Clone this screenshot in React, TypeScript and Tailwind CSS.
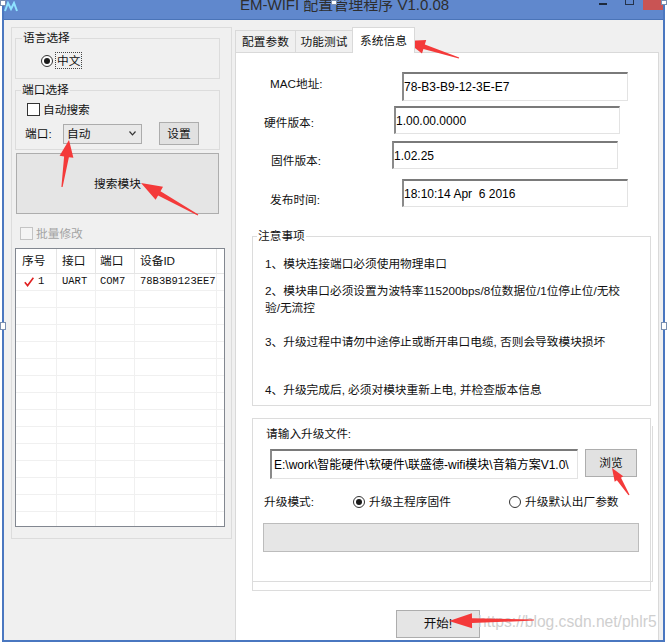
import type { ReactNode } from "react";

const colWidths = ["w-[41px]", "w-[39px]", "w-[39px]", "w-[82px]"];
const headPads = ["pl-[6px]", "pl-[5px]", "pl-[4px]", "pl-[5px]"];
const rowPads = ["pl-[8px]", "pl-[5px]", "pl-[4px]", "pl-[5px]"];

const arrows = [
  { from: [62, 187], to: [69, 140], head: 17, width: 14 },
  { from: [198, 215], to: [141, 183], head: 21, width: 15 },
  { from: [459, 58], to: [406, 41], head: 19, width: 14 },
  { from: [629, 495], to: [612, 468], head: 13, width: 10 },
  { from: [534, 620], to: [449, 621], head: 23, width: 15 },
];

function arrowPoints(from: number[], to: number[], head: number, width: number) {
  const [x1, y1] = from;
  const [x2, y2] = to;
  const len = Math.hypot(x2 - x1, y2 - y1);
  const ux = (x2 - x1) / len;
  const uy = (y2 - y1) / len;
  const nx = -uy;
  const ny = ux;
  const bx = x2 - ux * head;
  const by = y2 - uy * head;
  const hw = width / 2;
  const sw = 2.4;
  const tw = 0.6;
  const pts = [
    [x1 + nx * tw, y1 + ny * tw],
    [bx + nx * sw, by + ny * sw],
    [bx + nx * hw, by + ny * hw],
    [x2, y2],
    [bx - nx * hw, by - ny * hw],
    [bx - nx * sw, by - ny * sw],
    [x1 - nx * tw, y1 - ny * tw],
  ];
  return pts.map((p) => `${p[0].toFixed(1)},${p[1].toFixed(1)}`).join(" ");
}

function Radio({ checked }: { checked?: boolean }) {
  return (
    <span className="flex h-[12px] w-[12px] shrink-0 items-center justify-center rounded-full border border-[#333] bg-white">
      {checked ? <span className="h-[6px] w-[6px] rounded-full bg-[#1a1a1a]" /> : null}
    </span>
  );
}

function Field({ value, className }: { value: string; className: string }) {
  return (
    <div
      className={`flex items-center overflow-hidden whitespace-nowrap border-b border-l-2 border-r border-t-2 border-b-[#e3e3e3] border-l-[#8a8a8a] border-r-[#e3e3e3] border-t-[#7a7a7a] bg-white text-[12px] text-black ${className}`}
    >
      {value}
    </div>
  );
}

function ListRow({ cells, header }: { cells?: ReactNode[]; header?: boolean }) {
  return (
    <div
      className={
        header
          ? "flex h-[25px] shrink-0 border-b border-[#e5e5e5]"
          : "flex h-[17px] shrink-0 border-b border-[#f0f0f0]"
      }
    >
      {colWidths.map((w, i) => (
        <div
          key={i}
          className={`${w} flex shrink-0 items-center whitespace-nowrap border-r ${
            header ? "border-[#e5e5e5]" : "border-[#f0f0f0]"
          } ${header ? headPads[i] : rowPads[i]}`}
        >
          {cells?.[i]}
        </div>
      ))}
      <div className="flex-1" />
    </div>
  );
}

function GroupTitle({ children, className }: { children: ReactNode; className: string }) {
  return (
    <div className={`-mt-[8px] w-fit bg-[#f0f0f0] px-[1px] leading-[14px] ${className}`}>
      {children}
    </div>
  );
}

export default function App() {
  const mono = "font-['Liberation_Mono','Noto_Sans_CJK_SC',monospace] text-[10.5px]";

  return (
    <div className="relative h-[643px] w-[667px] overflow-hidden bg-white font-['Liberation_Sans','Noto_Sans_CJK_SC',sans-serif] text-[11.7px] text-[#111]">
      <div className="ml-[2px] flex h-[642px] w-[663px] flex-col border-x-2 border-b-2 border-[#4a77c0] bg-[#f0f0f0]">
        {/* title bar */}
        <div className="flex h-[20px] shrink-0 items-start border-b border-[#4a74b8] bg-[#6088cd]">
          <svg width="14" height="11" viewBox="0 0 14 11" className="mt-[1px] shrink-0">
            <path d="M1 10 L4 2 L7 8 L10 2 L13 10" fill="none" stroke="#8fe3ff" strokeWidth="2" />
          </svg>
          <div className="-mt-[3px] ml-[222px] whitespace-nowrap text-[15px] leading-[15px] text-[#2e2e2e]">
            EM-WIFI 配置管理程序 V1.0.08
          </div>
          <div className="ml-auto flex items-start">
            <div className="mt-[3px] h-[2px] w-[8px] bg-[#1e2a3c]" />
            <div className="ml-[18px] h-[5px] w-[9px] border border-t-0 border-[#24324a]" />
            <div className="ml-[9px] h-[10px] w-[20px] bg-[#c95454]" />
          </div>
        </div>

        {/* body */}
        <div className="flex min-h-0 flex-1 pl-[7px] pt-[7px]">
          {/* left panel */}
          <div className="flex h-[512px] w-[221px] shrink-0 flex-col border border-[#dcdcdc]">
            <div className="ml-[3px] mt-[10px] h-[41px] w-[205px] border border-[#dcdcdc]">
              <GroupTitle className="ml-[6px]">语言选择</GroupTitle>
              <div className="ml-[25px] mt-[7px] flex h-[17px] items-center">
                <Radio checked />
                <span className="ml-[2px] border border-dotted border-[#444] px-[1px] leading-[15px]">中文</span>
              </div>
            </div>

            <div className="ml-[3px] mt-[11px] h-[60px] w-[205px] border border-[#dcdcdc]">
              <GroupTitle className="ml-[5px]">端口选择</GroupTitle>
              <div className="ml-[11px] mt-[6px] flex h-[13px] items-center">
                <span className="h-[13px] w-[13px] shrink-0 border border-[#333] bg-white" />
                <span className="ml-[3px]">自动搜索</span>
              </div>
              <div className="mt-[6px] flex h-[23px] items-center">
                <span className="ml-[9px] w-[38px]">端口:</span>
                <div className="flex h-[20px] w-[79px] items-center justify-between border border-[#acacac] bg-[#e9e9e9] pl-[3px] pr-[5px]">
                  <span>自动</span>
                  <svg width="7" height="5" viewBox="0 0 7 5">
                    <path d="M0.5 0.5 L3.5 3.8 L6.5 0.5" fill="none" stroke="#333" strokeWidth="1.2" />
                  </svg>
                </div>
                <div className="ml-[17px] flex h-[23px] w-[40px] items-center justify-center border border-[#adadad] bg-[#e1e1e1]">
                  设置
                </div>
              </div>
            </div>

            <div className="ml-[4px] mt-[3px] flex h-[61px] w-[203px] shrink-0 items-center justify-center border border-[#adadad] bg-[#e5e5e5]">
              搜索模块
            </div>

            <div className="ml-[8px] mt-[13px] flex h-[13px] items-center">
              <span className="h-[13px] w-[13px] shrink-0 border border-[#c4c4c4] bg-[#f4f4f4]" />
              <span className="ml-[3px] text-[#a3a3a3]">批量修改</span>
            </div>

            <div className="ml-[3px] mt-[8px] flex h-[279px] w-[210px] flex-col overflow-hidden border border-[#828790] bg-white">
              <ListRow header cells={["序号", "接口", "端口", "设备ID"]} />
              <ListRow
                cells={[
                  <span key="c" className="flex items-center">
                    <svg width="10" height="10" viewBox="0 0 10 10">
                      <path d="M0.8 5.2 L3.6 8.6 L9.4 0.8" fill="none" stroke="#e02020" strokeWidth="1.6" />
                    </svg>
                    <span className={`ml-[4px] ${mono}`}>1</span>
                  </span>,
                  <span key="u" className={mono}>UART</span>,
                  <span key="p" className={mono}>COM7</span>,
                  <span key="i" className={mono}>78B3B9123EE7</span>,
                ]}
              />
              {Array.from({ length: 15 }).map((_, i) => (
                <ListRow key={i} />
              ))}
            </div>
          </div>

          {/* tab control */}
          <div className="ml-[3px] flex w-[424px] shrink-0 flex-col">
            <div className="flex h-[25px] shrink-0 items-end">
              <div className="flex h-[22px] w-[61px] items-center justify-center border border-b-0 border-[#d9d9d9] bg-[#f0f0f0]">
                配置参数
              </div>
              <div className="-ml-px flex h-[22px] w-[58px] items-center justify-center border border-b-0 border-[#d9d9d9] bg-[#f0f0f0]">
                功能测试
              </div>
              <div className="relative z-10 -mb-px -ml-px flex h-[26px] w-[63px] items-start justify-center border border-b-0 border-[#d9d9d9] bg-white pt-[4px]">
                系统信息
              </div>
            </div>

            <div className="flex flex-1 flex-col border border-b-0 border-[#d9d9d9] bg-white">
              <div className="mt-[19px] flex">
                <span className="ml-[34px] mt-[4px] w-[132px] shrink-0 leading-[16px]">MAC地址:</span>
                <Field value="78-B3-B9-12-3E-E7" className="h-[29px] w-[226px]" />
              </div>
              <div className="mt-[5px] flex">
                <span className="ml-[28px] mt-[9px] w-[130px] shrink-0 leading-[16px]">硬件版本:</span>
                <Field value="1.00.00.0000" className="h-[28px] w-[226px]" />
              </div>
              <div className="mt-[7px] flex">
                <span className="ml-[35px] mt-[12px] w-[121px] shrink-0 leading-[16px]">固件版本:</span>
                <Field value="1.02.25" className="h-[28px] w-[226px]" />
              </div>
              <div className="mt-[10px] flex">
                <span className="ml-[34px] mt-[13px] w-[132px] shrink-0 leading-[16px]">发布时间:</span>
                <Field value="18:10:14 Apr  6 2016" className="h-[28px] w-[226px] whitespace-pre" />
              </div>

              {/* notes */}
              <div className="ml-[16px] mt-[28px] h-[170px] w-[399px] shrink-0 border border-[#dcdcdc]">
                <div className="-mt-[8px] ml-[4px] w-fit bg-white px-[1px] leading-[14px]">注意事项</div>
                <div className="whitespace-nowrap pl-[12px] leading-[17px]">
                  <p className="mt-[12px]">1、模块连接端口必须使用物理串口</p>
                  <p className="mt-[10px]">
                    2、模块串口必须设置为波特率115200bps/8位数据位/1位停止位/无校
                    <br />
                    验/无流控
                  </p>
                  <p className="mt-[17px]">3、升级过程中请勿中途停止或断开串口电缆, 否则会导致模块损坏</p>
                  <p className="mt-[31px]">4、升级完成后, 必须对模块重新上电, 并检查版本信息</p>
                </div>
              </div>

              {/* upgrade */}
              <div className="ml-[16px] mt-[12px] h-[173px] w-[399px] shrink-0 border border-[#dcdcdc]">
                <div className="h-[156px] w-[400px] border-b border-r border-[#dcdcdc]">
                  <div className="ml-[13px] mt-[7px] leading-[16px]">请输入升级文件:</div>
                  <div className="mt-[7px] flex items-start">
                    <Field
                      value="E:\work\智能硬件\软硬件\联盛德-wifi模块\音箱方案V1.0\"
                      className="ml-[17px] h-[30px] w-[308px] pl-[2px]"
                    />
                    <div className="ml-[7px] flex h-[28px] w-[52px] items-center justify-center border border-[#adadad] bg-[#e1e1e1]">
                      浏览
                    </div>
                  </div>
                  <div className="mt-[13px] flex h-[20px] items-center">
                    <span className="ml-[11px] w-[89px] shrink-0">升级模式:</span>
                    <div className="flex w-[156px] shrink-0 items-center">
                      <Radio checked />
                      <span className="ml-[4px]">升级主程序固件</span>
                    </div>
                    <Radio />
                    <span className="ml-[4px]">升级默认出厂参数</span>
                  </div>
                  <div className="ml-[10px] mt-[11px] h-[29px] w-[376px] border border-[#bcbcbc] bg-[#e6e6e6]" />
                </div>
              </div>

              <div className="ml-[160px] mt-[19px] flex h-[28px] w-[84px] shrink-0 items-center justify-center border border-[#adadad] bg-[#e5e5e5] text-[12.5px]">
                开始!
              </div>
            </div>
          </div>
        </div>
      </div>

      {/* screenshot overlay: watermark, selection handles, annotation arrows */}
      <div className="pointer-events-none absolute left-[478px] top-[612px] whitespace-nowrap text-[15.6px] leading-[20px] text-[#cfcfcf]">
        https://blog.csdn.net/phlr5
      </div>
      <div className="absolute left-0 top-0 h-[6px] w-[6px] border border-[#7a8fb0] bg-white" />
      <div className="absolute left-[331px] top-0 h-[5px] w-[6px] border border-[#7a8fb0] bg-white" />
      <div className="absolute left-[661px] top-0 h-[5px] w-[6px] border border-[#7a8fb0] bg-white" />
      <div className="absolute left-0 top-[322px] h-[8px] w-[6px] border border-[#7a8fb0] bg-white" />
      <div className="absolute left-[661px] top-[322px] h-[8px] w-[6px] border border-[#7a8fb0] bg-white" />
      <svg className="pointer-events-none absolute left-0 top-0" width="667" height="643" viewBox="0 0 667 643">
        {arrows.map((a, i) => (
          <polygon key={i} points={arrowPoints(a.from, a.to, a.head, a.width)} fill="#f43a3a" />
        ))}
      </svg>
    </div>
  );
}
